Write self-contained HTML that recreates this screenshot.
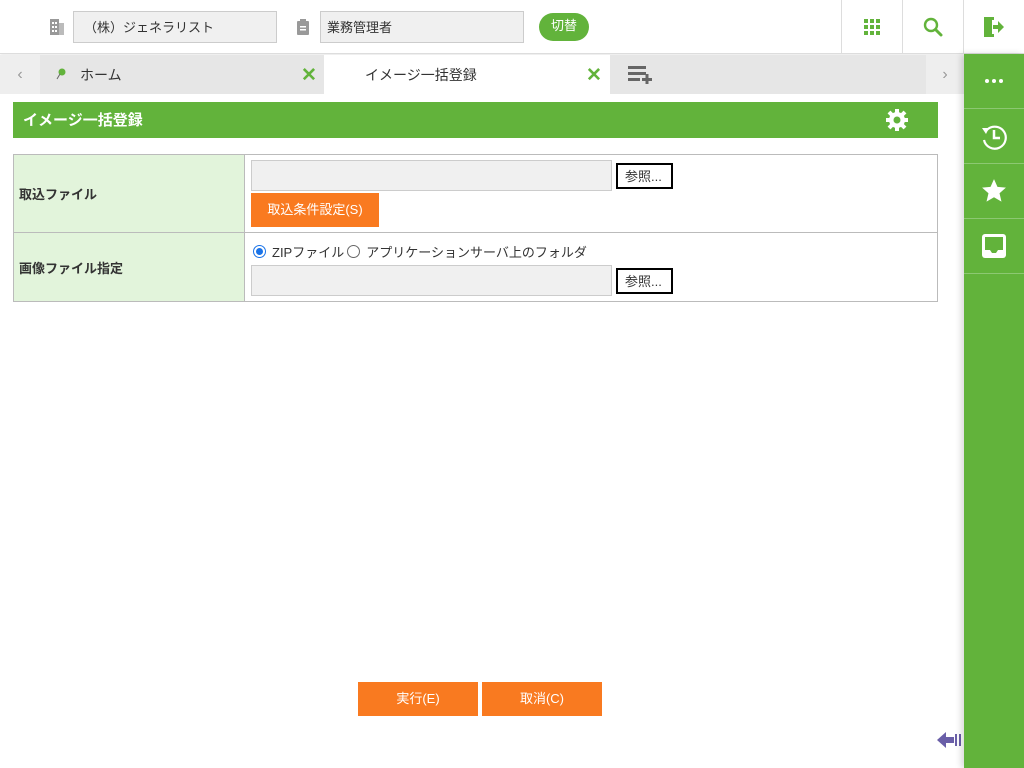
<!DOCTYPE html>
<html><head><meta charset="utf-8"><style>
*{box-sizing:border-box;margin:0;padding:0}
body{width:1024px;height:768px;overflow:hidden;background:#fff;font-family:"Liberation Sans","Noto Sans CJK JP",sans-serif;font-size:13px;color:#333;position:relative}
.abs{position:absolute}
.inp{position:absolute;background:#f0f0f0;border:1px solid #ccc;height:32px;font-size:13px;padding:5px 10px;color:#333}
.g{color:#62b33b}
.side{position:absolute;left:964px;top:54px;width:60px;height:714px;background:#62b33b;box-shadow:-3px 0 6px rgba(0,0,0,.15)}
.side div{height:55px;border-bottom:1px solid #8cc872;display:flex;align-items:center;justify-content:center}
.th{background:#e2f4db;font-weight:bold;font-size:13px;padding-left:5px;border:1px solid #bbb;vertical-align:middle}
.td{border:1px solid #bbb}
.btnw{position:absolute;background:#fff;border:2px solid #000;font-size:13px;padding:1px 7px;height:26px;width:57px}
.ob{position:absolute;background:#f97a20;color:#fff;font-size:13px;text-align:center}
</style></head><body>
<div class="abs" style="left:0;top:0;width:1024px;height:54px;border-bottom:1px solid #ddd;box-shadow:0 2px 3px rgba(0,0,0,.08)"></div>
<svg class="abs" style="left:50px;top:19px" width="14" height="16"><rect x="0" y="0" width="9" height="16" fill="#999"/><rect x="9" y="4" width="5" height="12" fill="#bbb"/><g fill="#fff"><rect x="2" y="3" width="2" height="2"/><rect x="5" y="3" width="2" height="2"/><rect x="2" y="7" width="2" height="2"/><rect x="5" y="7" width="2" height="2"/><rect x="2" y="11" width="2" height="2"/><rect x="5" y="11" width="2" height="2"/></g></svg>
<div class="inp" style="left:73px;top:11px;width:204px">（株）ジェネラリスト</div>
<svg class="abs" style="left:297px;top:19px" width="12" height="16"><rect x="0" y="2" width="12" height="14" rx="1" fill="#999"/><rect x="3" y="0" width="6" height="4" fill="#999"/><g fill="#fff"><rect x="3" y="7" width="6" height="1.5"/><rect x="3" y="10" width="6" height="1.5"/></g></svg>
<div class="inp" style="left:320px;top:11px;width:204px;padding-left:6px">業務管理者</div>
<div class="abs" style="left:539px;top:13px;width:50px;height:28px;border-radius:14px;background:#62b33b;color:#fff;text-align:center;line-height:26px;font-size:13px">切替</div>
<div class="abs" style="left:841px;top:0;width:1px;height:54px;background:#ddd"></div>
<div class="abs" style="left:902px;top:0;width:1px;height:54px;background:#ddd"></div>
<div class="abs" style="left:963px;top:0;width:1px;height:54px;background:#ddd"></div>
<svg class="abs" style="left:864px;top:19px" width="16" height="16" fill="#62b33b"><rect x="0" y="0" width="4" height="4"/><rect x="6" y="0" width="4" height="4"/><rect x="12" y="0" width="4" height="4"/><rect x="0" y="6" width="4" height="4"/><rect x="6" y="6" width="4" height="4"/><rect x="12" y="6" width="4" height="4"/><rect x="0" y="12" width="4" height="4"/><rect x="6" y="12" width="4" height="4"/><rect x="12" y="12" width="4" height="4"/></svg>
<svg class="abs" style="left:923px;top:17px" width="20" height="20"><circle cx="8" cy="8" r="6" fill="none" stroke="#62b33b" stroke-width="2.4"/><line x1="12.5" y1="12.5" x2="18" y2="18" stroke="#62b33b" stroke-width="3" stroke-linecap="round"/></svg>
<svg class="abs" style="left:983px;top:16px" width="22" height="22" fill="#62b33b"><path d="M1 1h10v3H5v14h6v3H1z"/><rect x="4" y="1" width="5" height="20"/><path d="M10 9h5V5l6 6-6 6v-4h-5z"/></svg>
<div class="abs" style="left:0;top:55px;width:964px;height:39px;background:#e6e6e6"></div>
<div class="abs" style="left:0;top:55px;width:40px;height:39px;background:#eee;color:#999;text-align:center;line-height:39px;font-size:16px">‹</div>
<div class="abs" style="left:926px;top:55px;width:38px;height:39px;background:#eee;color:#999;text-align:center;line-height:39px;font-size:16px">›</div>
<svg class="abs" style="left:56px;top:68px" width="10" height="12"><circle cx="6" cy="4" r="3.5" fill="#62b33b"/><line x1="4" y1="6" x2="1" y2="11" stroke="#666" stroke-width="1"/></svg>
<div class="abs" style="left:80px;top:65px;font-size:14px">ホーム</div>
<div class="abs g" style="left:301px;top:64px;font-size:19px;font-weight:bold">✕</div>
<div class="abs" style="left:324px;top:55px;width:286px;height:39px;background:#fff"></div>
<div class="abs" style="left:365px;top:65px;font-size:14px">イメージ一括登録</div>
<div class="abs g" style="left:586px;top:64px;font-size:19px;font-weight:bold">✕</div>
<svg class="abs" style="left:628px;top:66px" width="26" height="18" fill="#666"><rect x="0" y="0" width="18" height="3"/><rect x="0" y="6" width="18" height="3"/><rect x="0" y="12" width="12" height="3"/><rect x="14" y="12" width="10" height="3"/><rect x="17.5" y="8" width="3" height="10"/></svg>
<div class="abs" style="left:13px;top:102px;width:925px;height:36px;background:#62b33b;color:#fff;font-weight:bold;font-size:15px;padding:7px 0 0 10px">イメージ一括登録</div>
<svg class="abs" style="left:885px;top:108px" width="24" height="24" viewBox="0 0 24 24"><g fill="#fff"><circle cx="12" cy="12" r="8"/><g stroke="#fff" stroke-width="4"><line x1="12" y1="1" x2="12" y2="23"/><line x1="1" y1="12" x2="23" y2="12"/><line x1="4" y1="4" x2="20" y2="20"/><line x1="20" y1="4" x2="4" y2="20"/></g></g><circle cx="12" cy="12" r="3.5" fill="#62b33b"/></svg>
<table class="abs" style="left:13px;top:154px;width:925px;border-collapse:collapse">
<tr style="height:78px"><td class="th" style="width:231px">取込ファイル</td><td class="td"></td></tr>
<tr style="height:69px"><td class="th">画像ファイル指定</td><td class="td"></td></tr>
</table>
<div class="inp" style="left:251px;top:160px;width:361px;height:31px"></div>
<div class="btnw" style="left:616px;top:163px">参照...</div>
<div class="ob" style="left:251px;top:193px;width:128px;height:34px;line-height:33px">取込条件設定(S)</div>
<div class="abs" style="left:253px;top:242px;font-size:13px;display:flex;align-items:center">
<span style="display:inline-block;width:13px;height:13px;border-radius:50%;border:1px solid #1a73e8;position:relative;margin-right:6px"><span style="position:absolute;left:2px;top:2px;width:7px;height:7px;border-radius:50%;background:#1a73e8"></span></span>ZIPファイル<span style="display:inline-block;width:13px;height:13px;border-radius:50%;border:1px solid #666;margin:0 6px 0 3px"></span>アプリケーションサーバ上のフォルダ</div>
<div class="inp" style="left:251px;top:265px;width:361px;height:31px"></div>
<div class="btnw" style="left:616px;top:268px">参照...</div>
<div class="ob" style="left:358px;top:682px;width:120px;height:34px;line-height:33px">実行(E)</div>
<div class="ob" style="left:482px;top:682px;width:120px;height:34px;line-height:33px">取消(C)</div>
<svg class="abs" style="left:937px;top:730px" width="26" height="20" fill="#6a5fa8"><path d="M0 10 9 2v5h8v6H9v5z"/><rect x="18" y="4" width="2" height="12"/><rect x="22" y="4" width="2" height="12"/></svg>
<div class="side">
<div><svg width="18" height="4" fill="#fff"><circle cx="2" cy="2" r="2"/><circle cx="9" cy="2" r="2"/><circle cx="16" cy="2" r="2"/></svg></div>
<div><svg width="28" height="28" viewBox="0 0 28 28"><path d="M6 9A11 11 0 1 1 4 18" fill="none" stroke="#fff" stroke-width="2.2"/><path d="M2 6l7 0-3 6z" fill="#fff"/><path d="M14 8v8h6" fill="none" stroke="#fff" stroke-width="2.5"/></svg></div>
<div><svg width="26" height="26" viewBox="0 0 24 24"><path fill="#fff" d="M12 1l3.2 7.2 7.8.7-5.9 5.2 1.8 7.7L12 17.8 5.1 21.8l1.8-7.7L1 8.9l7.8-.7z"/></svg></div>
<div><svg width="26" height="26" viewBox="0 0 26 26"><rect x="1" y="1" width="24" height="24" rx="3" fill="#fff"/><path d="M4 4h18v13h-5l-2 3h-4l-2-3H4z" fill="#62b33b"/></svg></div>
</div>
</body></html>
